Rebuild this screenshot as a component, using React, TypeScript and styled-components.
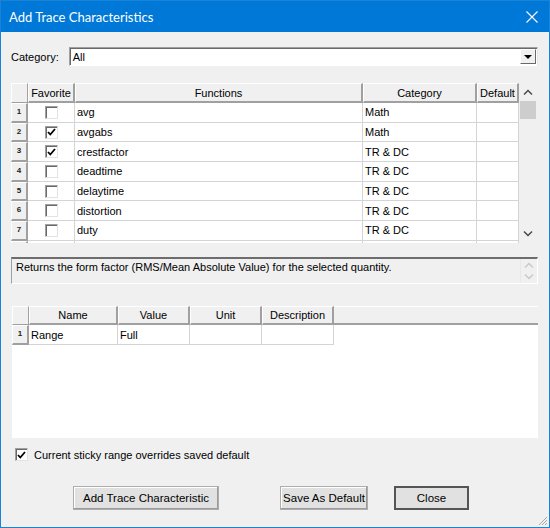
import React from 'react'
import styled, { createGlobalStyle } from 'styled-components'

const GlobalStyle = createGlobalStyle`
  html, body {
    margin: 0;
    padding: 0;
    background: #ffffff;
  }
  * {
    box-sizing: border-box;
  }
`

interface FunctionRow {
  name: string
  category: string
  favorite: boolean
}

const functionRows: FunctionRow[] = [
  { name: 'avg', category: 'Math', favorite: false },
  { name: 'avgabs', category: 'Math', favorite: true },
  { name: 'crestfactor', category: 'TR & DC', favorite: true },
  { name: 'deadtime', category: 'TR & DC', favorite: false },
  { name: 'delaytime', category: 'TR & DC', favorite: false },
  { name: 'distortion', category: 'TR & DC', favorite: false },
  { name: 'duty', category: 'TR & DC', favorite: false },
]

const Check = () => (
  <svg width="9" height="8" viewBox="0 0 9 8">
    <path d="M1 4 L3.3 6.5 L8 1" fill="none" stroke="#000" strokeWidth="1.8" />
  </svg>
)

const Chevron = ({ up, color }: { up?: boolean; color: string }) => (
  <svg width="10" height="6" viewBox="0 0 10 6">
    <path
      d={up ? 'M1 5.5 L5 1.5 L9 5.5' : 'M1 0.5 L5 4.5 L9 0.5'}
      fill="none"
      stroke={color}
      strokeWidth="1.4"
    />
  </svg>
)

const App = () => {
  return (
    <>
      <GlobalStyle />
      <Window>
        <TitleBar>
          <Title>Add Trace Characteristics</Title>
          <CloseX>
            <svg width="12" height="12" viewBox="0 0 12 12">
              <path d="M0.5 0.5 L11.5 11.5 M11.5 0.5 L0.5 11.5" stroke="#fff" strokeWidth="1.1" />
            </svg>
          </CloseX>
        </TitleBar>
        <Body>
          <CategoryRow>
            <Label>Category:</Label>
            <Combo>
              <ComboText>All</ComboText>
              <ComboButton>
                <svg width="8" height="4" viewBox="0 0 8 4">
                  <path d="M0 0 L8 0 L4 4 Z" fill="#000" />
                </svg>
              </ComboButton>
            </Combo>
          </CategoryRow>

          <FunctionsFrame>
            <FunctionsTable>
              <CornerCell />
              <HeaderCell>Favorite</HeaderCell>
              <HeaderCell>Functions</HeaderCell>
              <HeaderCell>Category</HeaderCell>
              <HeaderCell>Default</HeaderCell>
              {functionRows.map((row, i) => (
                <React.Fragment key={row.name}>
                  <RowHeader>{i + 1}</RowHeader>
                  <CheckCell>
                    <CheckBox>{row.favorite && <Check />}</CheckBox>
                  </CheckCell>
                  <DataCell>{row.name}</DataCell>
                  <DataCell>{row.category}</DataCell>
                  <DataCell />
                </React.Fragment>
              ))}
              <RowHeader $partial />
              <CheckCell $partial />
              <DataCell $partial />
              <DataCell $partial />
              <DataCell $partial />
            </FunctionsTable>
            <ScrollBar>
              <ScrollArrow>
                <Chevron up color="#444" />
              </ScrollArrow>
              <Thumb />
              <ScrollSpacer />
              <ScrollArrow>
                <Chevron color="#444" />
              </ScrollArrow>
            </ScrollBar>
          </FunctionsFrame>

          <DescriptionBox>
            <DescriptionText>
              Returns the form factor (RMS/Mean Absolute Value) for the selected quantity.
            </DescriptionText>
            <DisabledScroll>
              <Chevron up color="#c8c8c8" />
              <Chevron color="#c8c8c8" />
            </DisabledScroll>
          </DescriptionBox>

          <ParamsFrame>
            <ParamsTable>
              <CornerCell />
              <HeaderCell>Name</HeaderCell>
              <HeaderCell>Value</HeaderCell>
              <HeaderCell>Unit</HeaderCell>
              <HeaderCell>Description</HeaderCell>
              <BlankHeader />
              <RowHeader>1</RowHeader>
              <DataCell>Range</DataCell>
              <DataCell>Full</DataCell>
              <DataCell />
              <DataCell />
            </ParamsTable>
          </ParamsFrame>

          <StickyRow>
            <CheckBox>
              <Check />
            </CheckBox>
            <Label>Current sticky range overrides saved default</Label>
          </StickyRow>

          <ButtonRow>
            <Button $width={146}>Add Trace Characteristic</Button>
            <Button $width={88} $offset={61}>
              Save As Default
            </Button>
            <Button $width={75} $offset={26} $default>
              Close
            </Button>
          </ButtonRow>
        </Body>
        <Grip>
          <svg width="11" height="11" viewBox="0 0 11 11">
            <path d="M10 2 L2 10 M10 5 L5 10 M10 8 L8 10" stroke="#a8a8a8" strokeWidth="1" />
          </svg>
        </Grip>
      </Window>
    </>
  )
}

export default App

const uiFont = `'Liberation Sans', Arial, sans-serif`

const Window = styled('div')`
  position: relative;
  width: 550px;
  height: 528px;
  display: flex;
  flex-direction: column;
  background: #f0f0f0;
  border: 1px solid #1883d7;
  font-family: ${uiFont};
  font-size: 11px;
  color: #000;
`

const TitleBar = styled('div')`
  height: 31px;
  flex: none;
  display: flex;
  align-items: center;
  justify-content: space-between;
  background: #0078d7;
  padding: 0 11px 0 8px;
`

const Title = styled('span')`
  font-family: Lato, 'Noto Sans', sans-serif;
  font-size: 13px;
  color: #ffffff;
`

const CloseX = styled('span')`
  display: flex;
  align-items: center;
`

const Body = styled('div')`
  flex: 1;
  display: flex;
  flex-direction: column;
  padding: 15px 11px 0 10px;
`

const CategoryRow = styled('div')`
  display: flex;
  align-items: center;
  gap: 10px;
  height: 19px;
`

const Label = styled('span')`
  font-size: 11px;
  white-space: nowrap;
`

const Combo = styled('div')`
  flex: 1;
  height: 19px;
  display: flex;
  align-items: center;
  background: #fff;
  border-top: 1px solid #a0a0a0;
  border-left: 1px solid #a0a0a0;
  border-right: 1px solid #e3e3e3;
  border-bottom: 1px solid #fff;
  box-shadow: inset 1px 1px 0 #696969;
  padding: 0 1px 0 0;
`

const ComboText = styled('span')`
  flex: 1;
  padding-left: 3px;
`

const ComboButton = styled('div')`
  width: 16px;
  height: 15px;
  display: flex;
  align-items: center;
  justify-content: center;
  background: #f0f0f0;
  border-top: 1px solid #fff;
  border-left: 1px solid #fff;
  border-right: 1px solid #696969;
  border-bottom: 1px solid #696969;
`

const FunctionsFrame = styled('div')`
  margin-top: 17px;
  height: 160px;
  display: flex;
  overflow: hidden;
`

const FunctionsTable = styled('div')`
  display: grid;
  grid-template-columns: 17px 47px 288px 114px 42px;
  grid-template-rows: 20px repeat(7, 19.7px) 20px;
  align-content: start;
  background: #f0f0f0;
`

const ParamsFrame = styled('div')`
  margin-top: 22px;
  height: 132px;
  margin-left: 1px;
  background: #fff;
  overflow: hidden;
`

const ParamsTable = styled('div')`
  display: grid;
  grid-template-columns: 17px 89px 72px 72px 72px 1fr;
  grid-template-rows: 19px 20px;
  background: #fff;
`

const CornerCell = styled('div')`
  background: #f0f0f0;
  border-right: 1px solid #a0a0a0;
  border-bottom: 1px solid #a0a0a0;
  border-top: 1px solid #fff;
  border-left: 1px solid #fff;
`

const HeaderCell = styled('div')`
  display: flex;
  align-items: center;
  justify-content: center;
  background: #f0f0f0;
  border-top: 1px solid #fff;
  border-left: 1px solid #fff;
  border-right: 2px solid #a0a0a0;
  border-bottom: 2px solid #a0a0a0;
  white-space: nowrap;
  overflow: hidden;
`

const BlankHeader = styled('div')`
  background: #f0f0f0;
  border-top: 1px solid #fff;
  border-bottom: 2px solid #a0a0a0;
  grid-row: 1;
  grid-column: 6;
`

const RowHeader = styled('div')<{ $partial?: boolean }>`
  display: flex;
  justify-content: center;
  padding-top: 3px;
  font-size: 8px;
  font-weight: bold;
  color: #222;
  background: #f0f0f0;
  border-top: 1px solid #fff;
  border-left: 1px solid #fff;
  border-right: 2px solid #a0a0a0;
  border-bottom: ${(p) => (p.$partial ? 'none' : '2px solid #a0a0a0')};
`

const DataCell = styled('div')<{ $partial?: boolean }>`
  display: flex;
  align-items: center;
  padding-left: 2px;
  background: #fff;
  border-right: 1px solid #d4d4d4;
  border-bottom: ${(p) => (p.$partial ? 'none' : '1px solid #d4d4d4')};
  white-space: nowrap;
`

const CheckCell = styled(DataCell)`
  justify-content: center;
  padding-left: 0;
`

const CheckBox = styled('div')`
  width: 13px;
  height: 13px;
  display: flex;
  align-items: center;
  justify-content: center;
  background: #fff;
  border-top: 1px solid #a0a0a0;
  border-left: 1px solid #a0a0a0;
  border-right: 1px solid #e3e3e3;
  border-bottom: 1px solid #e3e3e3;
  box-shadow: inset 1px 1px 0 #696969;
  flex: none;
`

const ScrollBar = styled('div')`
  width: 18px;
  display: flex;
  flex-direction: column;
  align-items: center;
  background: #f0f0f0;
`

const ScrollArrow = styled('div')`
  height: 18px;
  width: 18px;
  display: flex;
  align-items: center;
  justify-content: center;
`

const Thumb = styled('div')`
  width: 16px;
  height: 18px;
  background: #cdcdcd;
`

const ScrollSpacer = styled('div')`
  flex: 1;
`

const DescriptionBox = styled('div')`
  margin-top: 14px;
  height: 27px;
  display: flex;
  background: #f0f0f0;
  border-top: 2px solid #6d6d6d;
  border-left: 1px solid #a0a0a0;
  border-right: 1px solid #fff;
  border-bottom: 1px solid #fff;
`

const DescriptionText = styled('div')`
  flex: 1;
  padding: 2px 4px;
  white-space: nowrap;
  overflow: hidden;
`

const DisabledScroll = styled('div')`
  width: 17px;
  display: flex;
  flex-direction: column;
  align-items: center;
  justify-content: space-around;
  border-left: 1px solid #e8e8e8;
`

const StickyRow = styled('div')`
  margin-top: 10px;
  margin-left: 4px;
  display: flex;
  align-items: center;
  gap: 6px;
  height: 13px;
`

const ButtonRow = styled('div')`
  margin-top: 25px;
  margin-left: 62px;
  display: flex;
  align-items: center;
`

const Button = styled('div')<{ $width: number; $offset?: number; $default?: boolean }>`
  width: ${(p) => p.$width}px;
  margin-left: ${(p) => p.$offset ?? 0}px;
  height: 24px;
  display: flex;
  align-items: center;
  justify-content: center;
  background: #e1e1e1;
  border: ${(p) => (p.$default ? '2px solid #555' : '1px solid #adadad')};
  box-shadow: ${(p) => (p.$default ? 'none' : 'inset -1px -1px 0 #9a9a9a, inset 1px 1px 0 #fff')};
  font-size: 11.5px;
  white-space: nowrap;
`

const Grip = styled('div')`
  position: absolute;
  right: 1px;
  bottom: 1px;
  width: 11px;
  height: 11px;
  display: flex;
`
